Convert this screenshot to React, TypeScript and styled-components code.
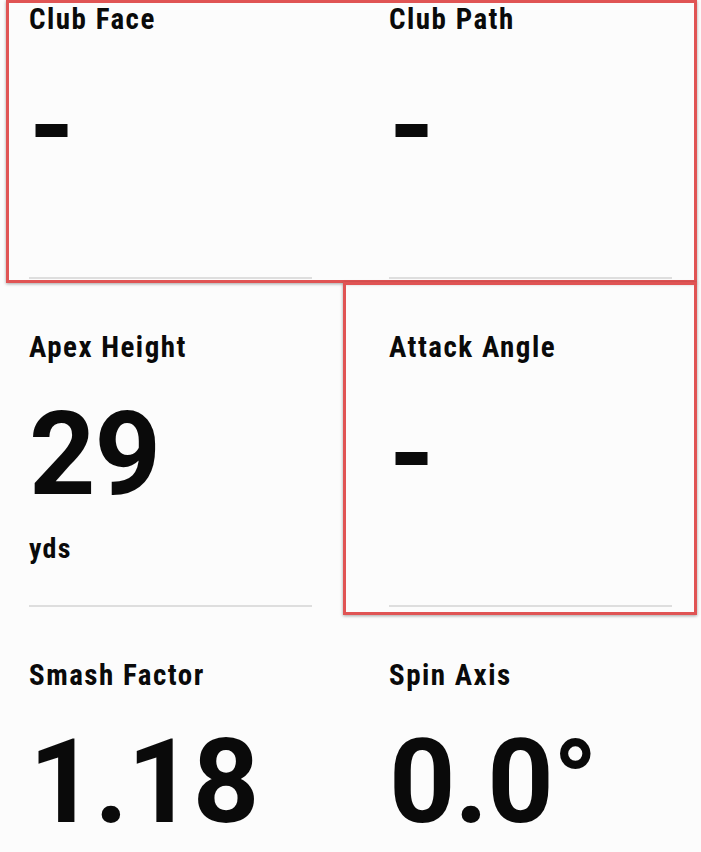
import { createGlobalStyle, styled } from "styled-components";

const GlobalStyle = createGlobalStyle`
  html, body {
    margin: 0;
    padding: 0;
    background: #fcfcfc;
    overflow: hidden;
  }
  body {
    color: #0a0a0a;
    font-family: Roboto, "Liberation Sans", sans-serif;
  }
`;

const Screen = styled.div`
  width: 701px;
  height: 852px;
  overflow: hidden;
  background: #fcfcfc;
`;

// scrolled a bit past the first row's top
const Grid = styled.div`
  position: relative;
  margin-top: -49px;
  padding: 0 29px;
  display: grid;
  grid-template-columns: 1fr 1fr;
  column-gap: 77px;
`;

const Cell = styled.div`
  box-sizing: border-box;
  height: 328px;
  padding-top: 54px;
  display: flex;
  flex-direction: column;
  border-bottom: 2px solid #dedede;
`;

const Label = styled.div`
  font-family: "Roboto Condensed", "Liberation Sans Narrow", Roboto, sans-serif;
  font-weight: 700;
  font-size: 29px;
  line-height: 1;
  letter-spacing: 1.5px;
`;

const Value = styled.div`
  margin-top: 34px;
  font-family: Roboto, "Liberation Sans", sans-serif;
  font-weight: 700;
  font-size: 116px;
  line-height: 1;
  letter-spacing: -1px;
`;

const Unit = styled.div`
  margin-top: 23px;
  font-family: "Roboto Condensed", "Liberation Sans Narrow", Roboto, sans-serif;
  font-weight: 700;
  font-size: 28px;
  line-height: 1;
  letter-spacing: 1.3px;
`;

const Highlight = styled.div<{ $top: number; $left: number; $width: number; $height: number }>`
  position: absolute;
  top: ${(p) => p.$top}px;
  left: ${(p) => p.$left}px;
  width: ${(p) => p.$width}px;
  height: ${(p) => p.$height}px;
  box-sizing: border-box;
  border: 3px solid #e05454;
  box-shadow: 0 1px 3px rgba(0, 0, 0, 0.35);
  pointer-events: none;
`;

type Metric = { label: string; value: string; unit?: string };

const metrics: Metric[] = [
  { label: "Club Face", value: "-" },
  { label: "Club Path", value: "-" },
  { label: "Apex Height", value: "29", unit: "yds" },
  { label: "Attack Angle", value: "-" },
  { label: "Smash Factor", value: "1.18" },
  { label: "Spin Axis", value: "0.0°" },
];

export default function App() {
  return (
    <Screen>
      <GlobalStyle />
      <Grid>
        {metrics.map((m) => (
          <Cell key={m.label}>
            <Label>{m.label}</Label>
            <Value>{m.value}</Value>
            {m.unit && <Unit>{m.unit}</Unit>}
          </Cell>
        ))}
        <Highlight $top={49} $left={6} $width={691} $height={283} />
        <Highlight $top={331} $left={343} $width={354} $height={333} />
      </Grid>
    </Screen>
  );
}
